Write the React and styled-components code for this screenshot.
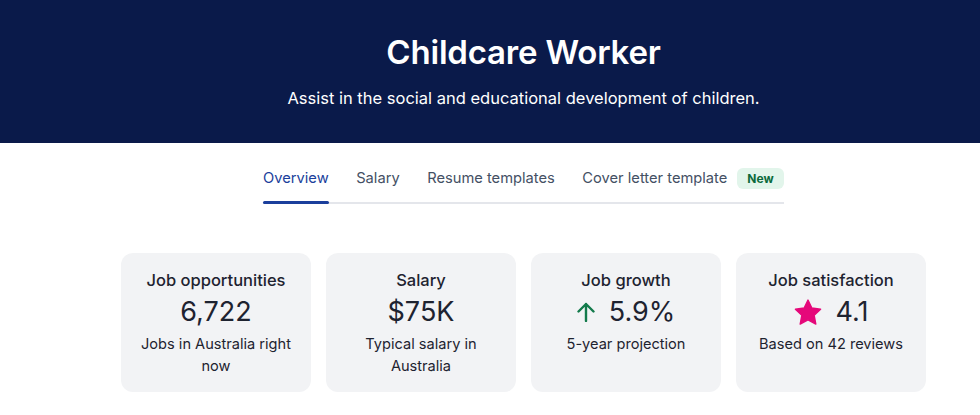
import React from 'react';
import styled, { createGlobalStyle } from 'styled-components';

const navyColor = '#0a1a4a';
const blueColor = '#1b3f9c';
const textColor = '#1e2330';
const grayTextColor = '#445064';
const cardColor = '#f2f3f5';
const baseFont = '"Inter", "Lato", "Liberation Sans", sans-serif';

const GlobalStyle = createGlobalStyle`
  body {
    margin: 0;
    background: #ffffff;
    font-family: ${baseFont};
  }
`;

const Page = styled.div`
  width: 980px;
  height: 415px;
  overflow: hidden;
  background: #ffffff;
`;

const Hero = styled.header`
  background: ${navyColor};
  height: 143px;
  padding-left: 67px;
  box-sizing: border-box;
  display: flex;
  flex-direction: column;
  align-items: center;
  color: #ffffff;
`;

const Title = styled.h1`
  margin: 31px 0 0;
  font-size: 33px;
  line-height: 42px;
  font-weight: 600;
  letter-spacing: -0.2px;
`;

const Subtitle = styled.p`
  margin: 14px 0 0;
  font-size: 16.5px;
  line-height: 22px;
  font-weight: 400;
`;

const Body = styled.main`
  padding-left: 67px;
  display: flex;
  flex-direction: column;
  align-items: center;
`;

const Tabs = styled.nav`
  margin-top: 17px;
  display: flex;
  align-items: center;
  gap: 27.5px;
  width: 521px;
  border-bottom: 2px solid #e4e6eb;
`;

const Tab = styled.div`
  position: relative;
  display: flex;
  align-items: center;
  gap: 10px;
  height: 36px;
  padding-bottom: 6px;
  font-size: 14.7px;
  color: ${p => (p.$active ? blueColor : grayTextColor)};
  white-space: nowrap;

  &::after {
    content: '';
    display: ${p => (p.$active ? 'block' : 'none')};
    position: absolute;
    left: 0;
    right: 0;
    bottom: -2px;
    height: 3px;
    border-radius: 2px;
    background: ${blueColor};
  }
`;

const Badge = styled.span`
  background: #e2f5eb;
  color: #0c6a3b;
  font-size: 12px;
  font-weight: 700;
  padding: 3px 10px;
  border-radius: 6px;
`;

const Cards = styled.section`
  margin-top: 49px;
  display: grid;
  grid-template-columns: repeat(4, 190px);
  gap: 15px;
`;

const Card = styled.div`
  background: ${cardColor};
  border-radius: 12px;
  height: 139px;
  padding: 16px 10px 0;
  box-sizing: border-box;
  display: flex;
  flex-direction: column;
  align-items: center;
  text-align: center;
  color: ${textColor};
`;

const CardTitle = styled.div`
  font-size: 16.5px;
  line-height: 22px;
  font-weight: 500;
`;

const Value = styled.div`
  margin-top: 3px;
  display: flex;
  align-items: center;
  gap: 14px;
  font-size: 27px;
  line-height: 36px;
  font-weight: 400;

  svg {
    display: block;
  }
`;

const Note = styled.div`
  margin-top: 3px;
  font-size: 14.6px;
  line-height: 22px;
`;

const ArrowUp = () => (
  <svg width="18" height="20" viewBox="0 0 18 20" fill="none">
    <path d="M9 19V2M1.5 9.5L9 2l7.5 7.5" stroke="#137a4b" strokeWidth="2.4" strokeLinecap="round" strokeLinejoin="round" />
  </svg>
);

const Star = () => (
  <svg width="28" height="27" viewBox="0 0 24 23">
    <path d="M12 0.8l3.3 6.9 7.5 1-5.5 5.2 1.4 7.5L12 17.8l-6.7 3.6 1.4-7.5L1.2 8.7l7.5-1z" fill="#e5087a" stroke="#e5087a" strokeWidth="1.2" strokeLinejoin="round" />
  </svg>
);

const tabs = [
  { label: 'Overview', active: true },
  { label: 'Salary' },
  { label: 'Resume templates' },
  { label: 'Cover letter template', badge: 'New' },
];

const stats = [
  { title: 'Job opportunities', value: '6,722', note: 'Jobs in Australia right now' },
  { title: 'Salary', value: '$75K', note: 'Typical salary in Australia' },
  { title: 'Job growth', value: '5.9%', icon: <ArrowUp />, note: '5-year projection' },
  { title: 'Job satisfaction', value: '4.1', icon: <Star />, note: 'Based on 42 reviews' },
];

export default function App() {
  return (
    <Page>
      <GlobalStyle />
      <Hero>
        <Title>Childcare Worker</Title>
        <Subtitle>Assist in the social and educational development of children.</Subtitle>
      </Hero>
      <Body>
        <Tabs>
          {tabs.map(t => (
            <Tab key={t.label} $active={t.active}>
              {t.label}
              {t.badge && <Badge>{t.badge}</Badge>}
            </Tab>
          ))}
        </Tabs>
        <Cards>
          {stats.map(s => (
            <Card key={s.title}>
              <CardTitle>{s.title}</CardTitle>
              <Value>
                {s.icon}
                <span>{s.value}</span>
              </Value>
              <Note>{s.note}</Note>
            </Card>
          ))}
        </Cards>
      </Body>
    </Page>
  );
}
